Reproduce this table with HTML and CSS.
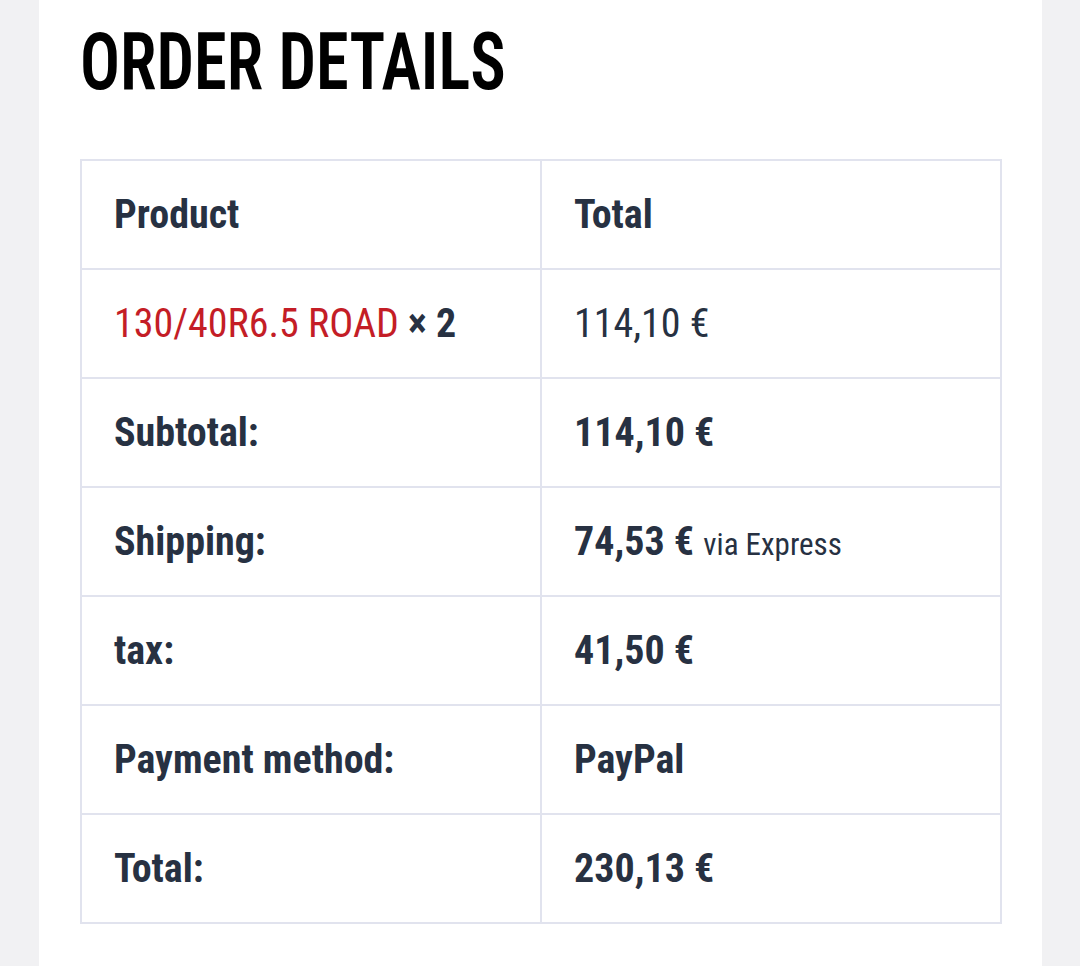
FILE: index.html
```html
<!DOCTYPE html>
<html lang="en">
<head>
<meta charset="utf-8">
<title>Order details</title>
<link rel="stylesheet" href="styles.css">
</head>
<body>
<main class="card">
  <h2 class="title"><span class="title-text">ORDER DETAILS</span></h2>
  <table class="order">
    <thead>
      <tr><th>Product</th><th>Total</th></tr>
    </thead>
    <tbody>
      <tr><td><a class="product" href="#">130/40R6.5 ROAD</a> <strong>× 2</strong></td><td>114,10&nbsp;€</td></tr>
      <tr><th>Subtotal:</th><td><strong>114,10&nbsp;€</strong></td></tr>
      <tr><th>Shipping:</th><td><strong>74,53&nbsp;€</strong> <small class="via">via Express</small></td></tr>
      <tr><th>tax:</th><td><strong>41,50&nbsp;€</strong></td></tr>
      <tr><th>Payment method:</th><td><strong>PayPal</strong></td></tr>
      <tr><th>Total:</th><td><strong>230,13&nbsp;€</strong></td></tr>
    </tbody>
  </table>
</main>
</body>
</html>
```
FILE: styles.css
```css
html, body {
  margin: 0;
  padding: 0;
}
body {
  background: #f1f1f3;
  font-family: "Roboto", "Liberation Sans", sans-serif;
  font-stretch: 75%;
  color: #273142;
  height: 966px;
  overflow: hidden;
}
.card {
  margin-left: 39px;
  width: 1003px;
  box-sizing: border-box;
  padding: 0 41px 60px;
  background: #ffffff;
  min-height: 966px;
}
.title {
  margin: 0;
  padding: 20px 0 0;
  height: 159px;
  box-sizing: border-box;
  font-family: "Roboto", sans-serif;
  font-stretch: 75%;
  font-weight: 600;
  font-size: 80px;
  line-height: 84px;
  color: #000;
}
.title-text {
  display: inline-block;
  transform: scaleX(0.83);
  transform-origin: left center;
}
.order {
  width: 922px;
  border-collapse: collapse;
  table-layout: fixed;
  font-size: 40px;
}
.order th, .order td {
  width: 50%;
  border: 2px solid #e1e3ee;
  padding: 0 32px;
  height: 109px;
  box-sizing: border-box;
  text-align: left;
  vertical-align: middle;
  line-height: 1.4;
}
.order th, .order strong {
  font-weight: 700;
}
.order td {
  font-weight: 400;
}
.product {
  color: #c41d26;
  text-decoration: none;
}
.via {
  font-size: 31px;
  font-weight: 400;
}
```
